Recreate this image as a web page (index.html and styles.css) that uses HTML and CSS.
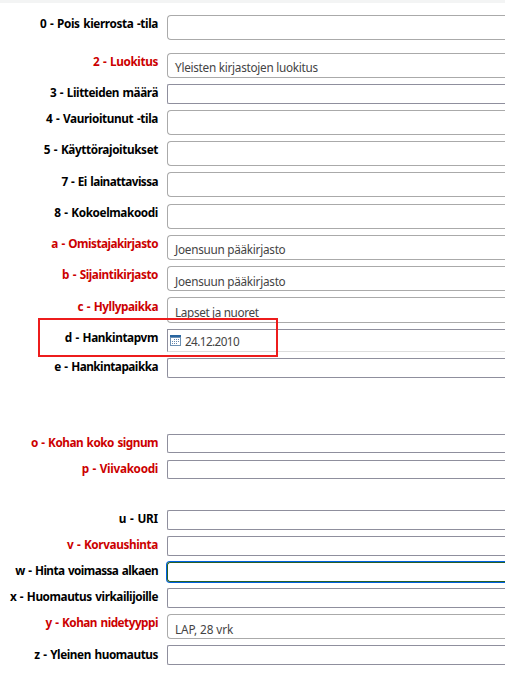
FILE: index.html
```
<!DOCTYPE html>
<html lang="fi">
<head>
<meta charset="utf-8">
<title>Niteen tiedot</title>
<link rel="stylesheet" href="styles.css">
</head>
<body>
<form class="item-form">
<div class="row g13"><span class="label">0 - Pois kierrosta -tila</span><div class="select"></div></div>
<div class="row g6 req"><span class="label">2 - Luokitus</span><div class="select"><span class="value">Yleisten kirjastojen luokitus</span></div></div>
<div class="row g6"><span class="label snug">3 - Liitteiden määrä</span><div class="text"></div></div>
<div class="row g6"><span class="label">4 - Vaurioitunut -tila</span><div class="select"></div></div>
<div class="row g6"><span class="label">5 - Käyttörajoitukset</span><div class="select"></div></div>
<div class="row g7"><span class="label low tightest">7 - Ei lainattavissa</span><div class="select"></div></div>
<div class="row g6"><span class="label">8 - Kokoelmakoodi</span><div class="select"></div></div>
<div class="row g6 req"><span class="label tight">a - Omistajakirjasto</span><div class="select"><span class="value">Joensuun pääkirjasto</span></div></div>
<div class="row g6 req"><span class="label snug">b - Sijaintikirjasto</span><div class="select"><span class="value low">Joensuun pääkirjasto</span></div></div>
<div class="row g6 req"><span class="label low snug">c - Hyllypaikka</span><div class="select tall"><span class="value low narrow">Lapset ja nuoret</span></div></div>
<div class="row g6 marked"><span class="label">d - Hankintapvm</span><div class="date">
<svg class="calendar" viewBox="0 0 11 11" shape-rendering="crispEdges"><path fill="#fff" stroke="#6d91b4" d="M.5.5h10v10H.5z"/><path fill="#2865a0" d="M0 0h11v2H0z"/><path fill="#6d91b4" d="M0 2h11v1H0z"/><path fill="#6386ad" d="M4 4h1v1H4zM6 4h1v1H6zM8 4h1v1H8zM2 6h1v1H2zM4 6h1v1H4zM6 6h1v1H6zM8 6h1v1H8zM2 8h1v1H2zM4 8h1v1H4zM6 8h1v1H6z"/></svg><span class="date-value">24.12.2010</span></div></div>
<div class="row g56"><span class="label tight">e - Hankintapaikka</span><div class="text"></div></div>
<div class="row g7 req"><span class="label tight">o - Kohan koko signum</span><div class="text short"></div></div>
<div class="row g31 req"><span class="label loose">p - Viivakoodi</span><div class="text short"></div></div>
<div class="row g6"><span class="label loosest">u - URI</span><div class="text"></div></div>
<div class="row g6 req"><span class="label">v - Korvaushinta</span><div class="text"></div></div>
<div class="row g6"><span class="label tightest">w - Hinta voimassa alkaen</span><div class="text focused"></div></div>
<div class="row g6"><span class="label snug">x - Huomautus virkailijoille</span><div class="text"></div></div>
<div class="row g6 req"><span class="label tight">y - Kohan nidetyyppi</span><div class="select"><span class="value low wide">LAP, 28 vrk</span></div></div>
<div class="row"><span class="label low snug">z - Yleinen huomautus</span><div class="text"></div></div>
</form>
</body>
</html>
```
FILE: styles.css
```
* { box-sizing: border-box; }
body {
  margin: 0;
  height: 684px;
  overflow: hidden;
  background: #fff;
  border-top: 3px solid #f3f4f4;
  font: 11.75px/16px "Noto Sans", sans-serif;
  color: #000;
}
.item-form { padding-top: 12px; }
.row { display: flex; align-items: flex-start; gap: 9px; }
.g6 { margin-bottom: 6px; }
.g7 { margin-bottom: 7px; }
.g13 { margin-bottom: 13px; }
.g31 { margin-bottom: 31px; }
.g56 { margin-bottom: 56px; }
.label {
  width: 158px;
  flex: none;
  text-align: right;
  white-space: nowrap;
  font-weight: 700;
  letter-spacing: -0.38px;
  word-spacing: 1px;
}
.label.loosest { letter-spacing: -0.2px; }
.label.loose { letter-spacing: -0.31px; }
.label.snug { letter-spacing: -0.43px; }
.label.tight { letter-spacing: -0.5px; }
.label.tightest { letter-spacing: -0.56px; }
.label.low { padding-top: 1px; }
.req .label { color: #c00; }
.select, .text, .date { flex: 1; border: 1px solid #8f8f9d; border-right: 0; }
.select { height: 25px; border-color: #aaa; border-radius: 4px 0 0 4px; padding: 5px 0 0 7px; }
.select.tall { height: 26px; }
.text { height: 20px; border-radius: 2px 0 0 2px; }
.text.short { height: 19px; }
.text.focused {
  border-color: #286028;
  border-radius: 3px 0 0 3px;
  box-shadow: 0 0 0 1px #0061e0;
}
.date {
  height: 23px;
  display: flex;
  padding: 3px 0 0 2px;
  border-color: #8f8f9d #ddd #ddd #8f8f9d;
}
.value, .date-value { display: block; color: #444; white-space: nowrap; letter-spacing: -0.27px; }
.value.low { padding-top: 1px; }
.value.narrow { letter-spacing: -0.35px; }
.value.wide { letter-spacing: -0.08px; }
.date-value { letter-spacing: -0.6px; }
.calendar { width: 11px; height: 11px; margin: 2px 4px 0 0; }
.marked { position: relative; }
.marked::after {
  content: "";
  position: absolute;
  left: 38px;
  top: -11px;
  width: 236px;
  height: 35px;
  border: 2px solid #ed1c1c;
}
```
